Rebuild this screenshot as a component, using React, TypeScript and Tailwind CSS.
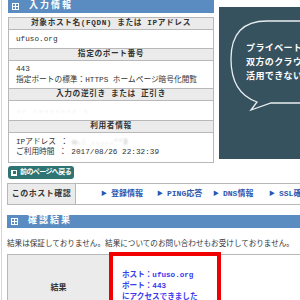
import React from "react";

const headCell = "h-[12px] border-t border-[#b8b8b8] bg-[#ebebeb] flex items-center justify-center text-[7.7px] font-bold leading-none tracking-[0.6px]";

function SectionBar({ label }: { label: string }) {
    return (
        <div className="h-[13px] bg-[#5b8cc1] flex items-center">
            <div className="ml-[4px] w-[7px] h-[7px] bg-white grid grid-cols-2 gap-[1px] p-[1px]">
                <div className="bg-[#5b8cc1]" />
                <div className="bg-[#5b8cc1]" />
                <div className="bg-[#5b8cc1]" />
                <div className="bg-[#5b8cc1]" />
            </div>
            <span className="ml-[10px] text-[9px] text-white font-bold tracking-[2px] leading-none">{label}</span>
        </div>
    );
}

function LinkItem({ label }: { label: string }) {
    return (
        <div className="w-[56px] flex items-center gap-[4px] text-[8px] font-bold text-[#2b56b0] leading-none whitespace-nowrap">
            <span className="text-[6px]">▶</span>
            <span>{label}</span>
        </div>
    );
}

export default function App() {
    return (
        <div className="w-[300px] h-[300px] overflow-hidden bg-white font-['Liberation_Mono','Noto_Sans_CJK_JP',monospace] text-[#333]">
            <div className="w-[380px] ml-[1px] pl-[5px] border-l border-[#d6d6d6] h-[320px]">

                {/* --- top: input info + banner --- */}
                <div className="flex">
                    <div className="w-[207px] pl-[1px]">
                        <SectionBar label="入力情報" />
                        <div className="mt-[4px] border-x border-b border-[#b8b8b8] text-[7.7px] leading-[11px]">
                            <div className={headCell}>対象ホスト名(FQDN) または IPアドレス</div>
                            <div className="h-[19px] border-t border-[#b8b8b8] flex items-center pl-[7px]">ufuso.org</div>
                            <div className={headCell}>指定のポート番号</div>
                            <div className="h-[28px] border-t border-[#b8b8b8] pl-[7px] pt-[3px] whitespace-nowrap">
                                <div>443</div>
                                <div>指定ポートの標準：HTTPS ホームページ暗号化閲覧</div>
                            </div>
                            <div className={headCell}>入力の逆引き または 正引き</div>
                            <div className="h-[20px] border-t border-[#b8b8b8] flex items-center pl-[7px]">
                                <span className="text-[#bbb] blur-[1px] tracking-[1px]">.. ........ .</span>
                            </div>
                            <div className={headCell}>利用者情報</div>
                            <div className="h-[30px] border-t border-[#b8b8b8] pl-[7px] pt-[4px] leading-[10px] whitespace-nowrap">
                                <div className="flex">
                                    <span>IPアドレス ： </span>
                                    <span className="ml-[4px] text-[#aaa] blur-[1px]">ω.: .....''3</span>
                                </div>
                                <div>ご利用時間 ： 2017/08/26 22:32:39</div>
                            </div>
                        </div>
                    </div>

                    <div className="ml-[5px] mt-[7px] w-[120px] h-[152px] bg-[#36525f] relative overflow-hidden">
                        <svg className="absolute inset-0" width="120" height="152" viewBox="0 0 120 152" fill="none">
                            <path d="M120 14 L48 14 Q12 14 12 52 Q12 86 38 95 L32 103 L52 96 L120 96" stroke="#e8eef0" strokeWidth="1.3" />
                        </svg>
                        <div className="absolute left-[27px] top-[34px] text-[9px] leading-[14px] text-white font-bold tracking-[0.4px] font-['Noto_Sans_CJK_JP',sans-serif] whitespace-nowrap">
                            <div>プライベートとパブリック</div>
                            <div>双方のクラウドを</div>
                            <div>活用できないとお悩みの方へ</div>
                        </div>
                    </div>
                </div>

                {/* back button */}
                <div className="mt-[3px] ml-[1px] w-[66px] h-[13px] rounded-[3px] bg-[#2f7472] flex items-center gap-[3px] pl-[3px] text-[7px] font-bold text-white leading-none whitespace-nowrap overflow-hidden">
                    <div className="w-[6px] h-[6px] shrink-0 bg-white flex items-center justify-center">
                        <div className="w-[3px] h-[3px] bg-[#2f7472]" />
                    </div>
                    <span className="tracking-[-0.6px]">前のページへ戻る</span>
                </div>

                {/* host check links */}
                <div className="mt-[4px] border border-[#b8b8b8] h-[22px] flex">
                    <div className="w-[68px] bg-[#ebebeb] border-r border-[#b8b8b8] flex items-center justify-center text-[8px] font-bold tracking-[0.5px]">このホスト確認</div>
                    <div className="flex items-center pl-[25px]">
                        <LinkItem label="登録情報" />
                        <LinkItem label="PING応答" />
                        <LinkItem label="DNS情報" />
                        <LinkItem label="SSL確認" />
                    </div>
                </div>

                {/* result section */}
                <div className="mt-[10px]">
                    <SectionBar label="確認結果" />
                </div>
                <p className="mt-[11px] text-[7.6px] leading-[10px] whitespace-nowrap">結果は保証しておりません。結果についてのお問い合わせもお受けしておりません。</p>

                <div className="mt-[5px] flex border-t border-[#b8b8b8]">
                    <div className="w-[102px] h-[66px] bg-[#ebebeb] border-l border-[#b8b8b8] flex items-center justify-center text-[8px] font-bold">結果</div>
                    <div className="-mt-[3px] w-[112px] h-[70px] border-[4px] border-[#f00000] bg-white pl-[9px] pt-[14px] text-[7.6px] font-bold text-[#3a3af0] leading-[11px] whitespace-nowrap">
                        <div>ホスト：ufuso.org</div>
                        <div>ポート：443</div>
                        <div>にアクセスできました</div>
                    </div>
                </div>
            </div>
        </div>
    );
}
